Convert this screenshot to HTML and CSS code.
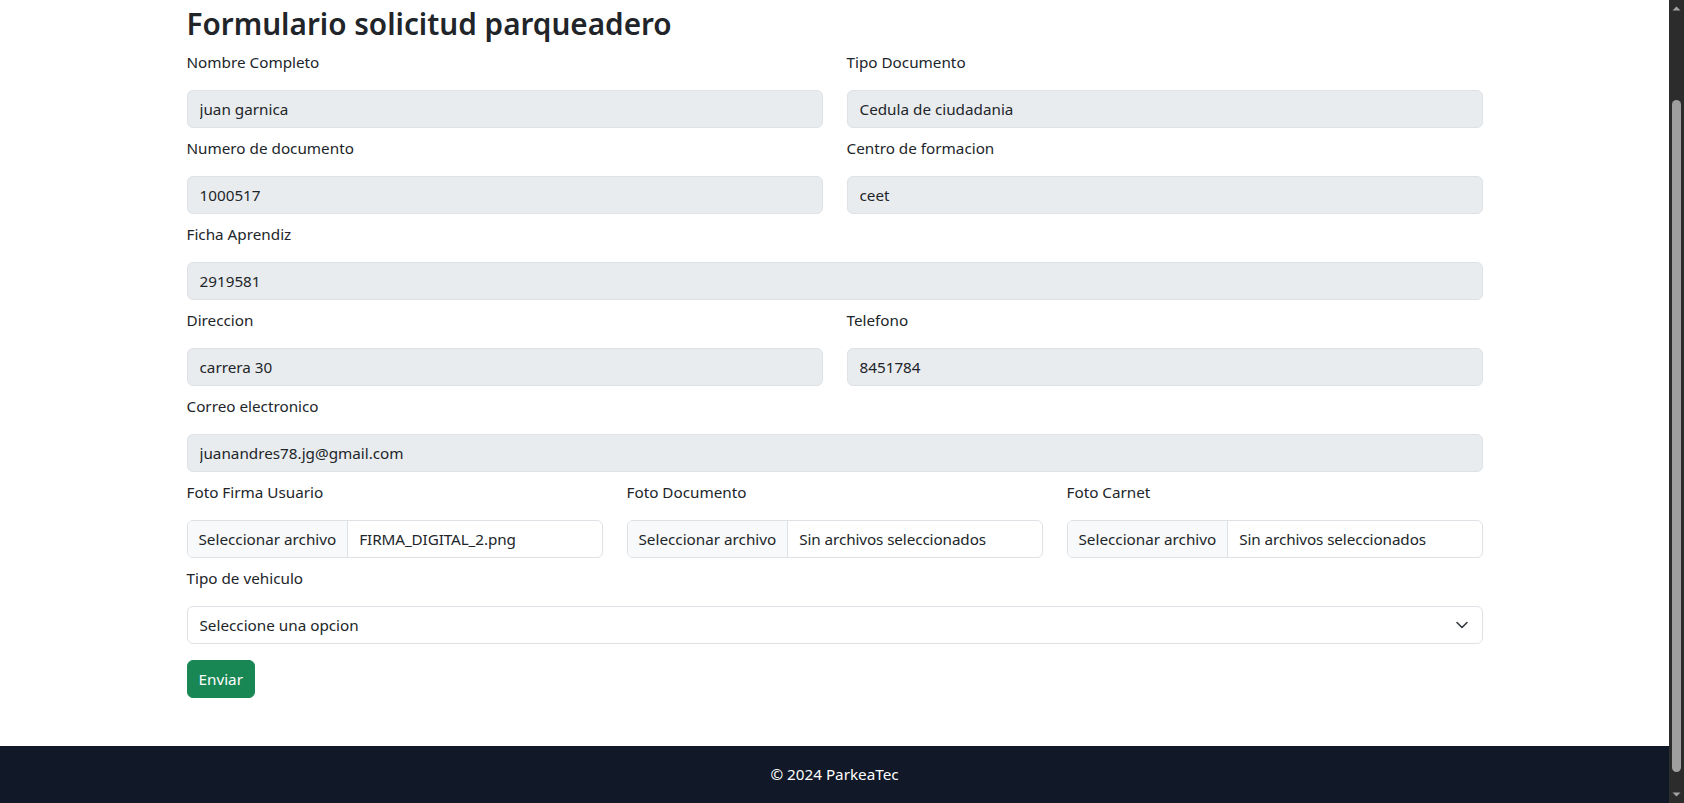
FILE: index.html
```html
<!DOCTYPE html>
<html lang="es">
<head>
<meta charset="utf-8">
<title>Formulario solicitud parqueadero</title>
<link rel="stylesheet" href="styles.css">
</head>
<body>
<div class="screen">
  <div class="page">
    <main class="container">
      <h2 class="title">Formulario solicitud parqueadero</h2>
      <form class="form">
        <div class="grid two">
          <div class="field">
            <label class="label">Nombre Completo</label>
            <input class="control" type="text" value="juan garnica" disabled>
          </div>
          <div class="field">
            <label class="label">Tipo Documento</label>
            <input class="control" type="text" value="Cedula de ciudadania" disabled>
          </div>
        </div>
        <div class="grid two">
          <div class="field">
            <label class="label">Numero de documento</label>
            <input class="control" type="text" value="1000517" disabled>
          </div>
          <div class="field">
            <label class="label">Centro de formacion</label>
            <input class="control" type="text" value="ceet" disabled>
          </div>
        </div>
        <div class="field">
          <label class="label">Ficha Aprendiz</label>
          <input class="control" type="text" value="2919581" disabled>
        </div>
        <div class="grid two">
          <div class="field">
            <label class="label">Direccion</label>
            <input class="control" type="text" value="carrera 30" disabled>
          </div>
          <div class="field">
            <label class="label">Telefono</label>
            <input class="control" type="text" value="8451784" disabled>
          </div>
        </div>
        <div class="field">
          <label class="label">Correo electronico</label>
          <input class="control" type="text" value="juanandres78.jg@gmail.com" disabled>
        </div>
        <div class="grid three">
          <div class="field">
            <label class="label">Foto Firma Usuario</label>
            <div class="file">
              <span class="file-btn">Seleccionar archivo</span>
              <span class="file-name">FIRMA_DIGITAL_2.png</span>
            </div>
          </div>
          <div class="field">
            <label class="label">Foto Documento</label>
            <div class="file">
              <span class="file-btn">Seleccionar archivo</span>
              <span class="file-name">Sin archivos seleccionados</span>
            </div>
          </div>
          <div class="field">
            <label class="label">Foto Carnet</label>
            <div class="file">
              <span class="file-btn">Seleccionar archivo</span>
              <span class="file-name">Sin archivos seleccionados</span>
            </div>
          </div>
        </div>
        <div class="field last">
          <label class="label">Tipo de vehiculo</label>
          <div class="select">
            <span>Seleccione una opcion</span>
            <svg class="chev" width="12" height="8" viewBox="0 0 12 8"><path d="M1 1.5l5 5 5-5" fill="none" stroke="#343a40" stroke-width="1.6" stroke-linecap="round" stroke-linejoin="round"/></svg>
          </div>
        </div>
        <button class="btn-success" type="button">Enviar</button>
      </form>
    </main>
    <footer class="footer">© 2024 ParkeaTec</footer>
  </div>
  <div class="scrollbar">
    <svg class="arrow" width="15" height="17" viewBox="0 0 15 17"><path d="M3.5 10.5h8l-4-4z" fill="#a3a3a3"/></svg>
    <div class="track"><div class="thumb"></div></div>
    <svg class="arrow" width="15" height="17" viewBox="0 0 15 17"><path d="M3.5 6.5h8l-4 4z" fill="#a3a3a3"/></svg>
  </div>
</div>
</body>
</html>
```
FILE: styles.css
```css
* { box-sizing: border-box; }
html, body { margin: 0; padding: 0; }
body {
  font-family: "Noto Sans", "Open Sans", sans-serif;
  font-size: 15.25px;
  line-height: 24px;
  color: #212529;
  background: #fff;
}
.screen {
  display: flex;
  height: 803px;
  overflow: hidden;
}
.page {
  flex: 1;
  display: flex;
  flex-direction: column;
  min-width: 0;
}
.container {
  flex: 1;
  width: 1296px;
  margin: 0 auto;
}
.title {
  margin: 5px 0 7px;
  font-size: 29.7px;
  line-height: 38px;
  font-weight: 600;
  color: #212529;
}
.grid { display: grid; column-gap: 24px; }
.grid.two { grid-template-columns: 1fr 1fr; }
.grid.three { grid-template-columns: 1fr 1fr 1fr; }
.field { margin-bottom: 8px; }
.field.last { margin-bottom: 16px; }
.label {
  display: block;
  line-height: 24px;
  margin-bottom: 16px;
}
.control {
  display: block;
  width: 100%;
  height: 38px;
  padding: 6px 12px;
  font: inherit;
  font-size: 15.25px;
  line-height: 24px;
  color: #212529;
  -webkit-text-fill-color: #212529;
  opacity: 1;
  background: #e9ecef;
  border: 1px solid #dee2e6;
  border-radius: 6px;
  outline: none;
}
.file {
  display: flex;
  height: 38px;
  border: 1px solid #dee2e6;
  border-radius: 6px;
  overflow: hidden;
  background: #fff;
}
.file-btn {
  padding: 6px 11px;
  background: #f8f9fa;
  border-right: 1px solid #dee2e6;
  white-space: nowrap;
}
.file-name {
  padding: 6px 11px;
  white-space: nowrap;
  letter-spacing: -0.1px;
}
.select {
  display: flex;
  align-items: center;
  justify-content: space-between;
  height: 38px;
  padding: 6px 14px 6px 12px;
  border: 1px solid #dee2e6;
  border-radius: 6px;
  background: #fff;
}
.chev { display: block; }
.btn-success {
  display: block;
  height: 38px;
  padding: 6px 11px;
  font: inherit;
  font-size: 15.25px;
  line-height: 24px;
  color: #fff;
  background: #198754;
  border: 1px solid #198754;
  border-radius: 6px;
}
.footer {
  background: #111827;
  color: #fff;
  text-align: center;
  padding: 16px 0 17px;
  line-height: 24px;
}
.scrollbar {
  width: 15px;
  flex: none;
  display: flex;
  flex-direction: column;
  background: #2c2c2c;
}
.arrow { display: block; flex: none; }
.track {
  flex: 1;
  display: flex;
  flex-direction: column;
  padding-top: 83px;
  padding-bottom: 14px;
}
.thumb {
  flex: 1;
  margin: 0 3px 0 3px;
  background: #9f9f9f;
  border-radius: 5px;
}
```
